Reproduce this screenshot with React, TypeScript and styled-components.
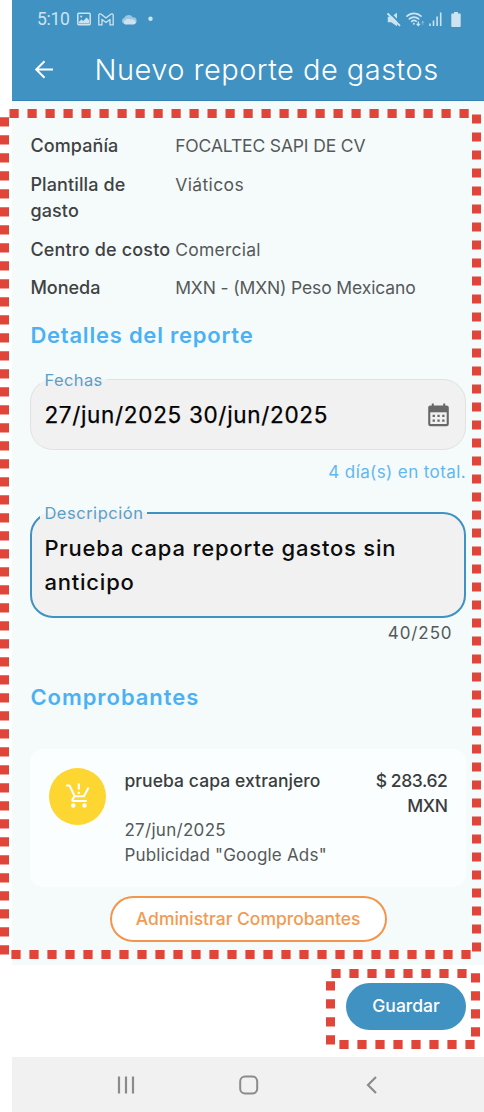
import React from 'react';
import styled, { createGlobalStyle } from 'styled-components';

const blue = '#3f92c2';
const sky = '#4cb1f3';
const red = '#e14539';

const GlobalStyle = createGlobalStyle`
  * { box-sizing: border-box; }
  body { margin: 0; background: #fff; font-family: Inter, sans-serif; }
`;

const Page = styled.div`
  position: relative;
  width: 484px;
  height: 1112px;
  padding-left: 12px;
  overflow: hidden;
  display: flex;
  flex-direction: column;
`;

const Header = styled.header`
  height: 101px;
  flex: none;
  background: ${blue};
  color: #fff;
  border-bottom: 1px solid #3585b4;
`;

const StatusBar = styled.div`
  height: 38px;
  padding: 0 23px 0 25px;
  display: flex;
  align-items: center;
  justify-content: space-between;
  color: #cde4f0;
  svg { display: block; }
`;

const StatusGroup = styled.div<{ $gap: number }>`
  display: flex;
  align-items: center;
  gap: ${p => p.$gap}px;
`;

const Clock = styled.span`
  font: 400 17.5px/20px Roboto, sans-serif;
  letter-spacing: -0.3px;
`;

const TitleBar = styled.div`
  height: 62px;
  display: flex;
  align-items: center;
  padding-left: 22px;
  svg { display: block; }
`;

const Title = styled.h1`
  margin: 2px 0 0 40.5px;
  font-size: 29px;
  font-weight: 300;
  line-height: 36px;
  letter-spacing: 0.47px;
`;

const Content = styled.main`
  height: 864px;
  flex: none;
  padding: 32.4px 18px 0 18.4px;
  background: #f5fbfb;
  display: flex;
  flex-direction: column;
`;

const Details = styled.dl`
  margin: 0;
  display: flex;
  flex-direction: column;
  gap: 13.2px;
`;

const DetailRow = styled.div`
  display: flex;
  font-size: 18px;
  line-height: 25.6px;
`;

const DetailLabel = styled.dt<{ $ls: number }>`
  width: 144.8px;
  flex: none;
  color: #3f4243;
  font-weight: 500;
  letter-spacing: ${p => p.$ls}px;
`;

const DetailValue = styled.dd<{ $ls: number }>`
  margin: 0;
  color: #55595a;
  font-size: 17.5px;
  font-weight: 400;
  letter-spacing: ${p => p.$ls}px;
  white-space: nowrap;
`;

const SectionTitle = styled.h2<{ $top: number; $ls: number }>`
  margin: ${p => p.$top}px 0 0;
  color: ${sky};
  font-size: 22px;
  font-weight: 600;
  line-height: 30px;
  letter-spacing: ${p => p.$ls}px;
`;

const Field = styled.fieldset<{ $active?: boolean; $top: number; $height: number }>`
  margin: ${p => p.$top}px 0 0;
  height: ${p => p.$height}px;
  min-width: 0;
  padding: 0 ${p => (p.$active ? 12 : 16)}px 0 ${p => (p.$active ? 8 : 9)}px;
  border: ${p => (p.$active ? `2px solid ${blue}` : '1px solid #e1e3e3')};
  border-radius: 23px;
  background: #f1f1f1;
`;

const Legend = styled.legend<{ $ls: number }>`
  height: 20px;
  padding: 0 4px;
  color: #5a9fc8;
  font-size: 16.5px;
  font-weight: 400;
  line-height: 20px;
  letter-spacing: ${p => p.$ls}px;
`;

const DateValue = styled.div`
  height: 50px;
  padding-left: 4px;
  display: flex;
  align-items: center;
  justify-content: space-between;
  color: #000;
  font-size: 22.5px;
  font-weight: 400;
  line-height: 30px;
  letter-spacing: 0.68px;
  -webkit-text-stroke: 0.25px #000;
  svg { display: block; }
`;

const Description = styled.div`
  padding: 8px 0 0 4px;
  color: #0c0c0c;
  font-size: 22px;
  font-weight: 500;
  line-height: 34px;
  letter-spacing: 0.79px;
`;

const Helper = styled.div<{ $top: number; $right: number; $color: string; $ls: number }>`
  margin-top: ${p => p.$top}px;
  padding-right: ${p => p.$right}px;
  text-align: right;
  color: ${p => p.$color};
  font-size: 17px;
  font-weight: 400;
  line-height: 24px;
  letter-spacing: ${p => p.$ls}px;
`;

const Card = styled.article`
  margin-top: 37.5px;
  height: 138.3px;
  flex: none;
  padding: 18.5px 18.5px 0 18.5px;
  display: flex;
  align-items: flex-start;
  background: #fafefe;
  border-radius: 13px;
  color: #3a3d3e;
  font-size: 17.5px;
  line-height: 25px;
`;

const Avatar = styled.div`
  width: 57.5px;
  height: 57.5px;
  flex: none;
  display: grid;
  place-items: center;
  border-radius: 50%;
  background: #fdd631;
`;

const CardBody = styled.div`
  flex: 1;
  margin: 0.3px 0 0 18px;
`;

const CardTop = styled.div`
  height: 50px;
  display: flex;
  justify-content: space-between;
  font-weight: 500;
  letter-spacing: 0.07px;
`;

const Amount = styled.div`
  width: 80px;
  text-align: right;
  letter-spacing: -0.4px;
`;

const CardLine = styled.div<{ $ls: number }>`
  color: #55595a;
  font-size: 17px;
  font-weight: 400;
  letter-spacing: ${p => p.$ls}px;
`;

const Button = styled.button<{ $filled?: boolean }>`
  padding: 0;
  height: 46.5px;
  width: ${p => (p.$filled ? 120 : 277)}px;
  border: ${p => (p.$filled ? 'none' : '2px solid #f3954b')};
  border-radius: 24px;
  background: ${p => (p.$filled ? blue : '#fff')};
  color: ${p => (p.$filled ? '#fff' : '#f39a52')};
  font: 500 17.5px/24px Inter, sans-serif;
  letter-spacing: -0.02px;
`;

const ManageRow = styled.div`
  margin-top: 8.4px;
  display: flex;
  justify-content: center;
`;

const Footer = styled.footer`
  height: 92px;
  flex: none;
  padding: 18px 18px 0 0;
  display: flex;
  justify-content: flex-end;
  align-items: flex-start;
`;

const NavBar = styled.nav`
  height: 55px;
  flex: none;
  display: flex;
  align-items: center;
  justify-content: space-between;
  padding: 1px 103px 0 103px;
  background: #f1f1f1;
  svg { display: block; }
`;

const Callouts = styled.svg`
  position: absolute;
  left: 0;
  top: 0;
  pointer-events: none;
`;

const details = [
  { label: 'Compañía', value: 'FOCALTEC SAPI DE CV', a: 0.1, b: -0.15 },
  { label: 'Plantilla de gasto', value: 'Viáticos', a: 0.12, b: 0.38 },
  { label: 'Centro de costo', value: 'Comercial', a: 0.18, b: 0.23 },
  { label: 'Moneda', value: 'MXN - (MXN) Peso Mexicano', a: 0, b: -0.13 },
];

const PictureIcon = () => (
  <svg width="14" height="14" viewBox="0 0 14 14" fill="none">
    <rect x=".8" y="1.3" width="12.4" height="11.4" rx="1" stroke="currentColor" strokeWidth="1.5" />
    <path d="M2 11.5V9.7l2.5-2.2 1.7 1.5L9.6 5.5 12 8v3.5z" fill="currentColor" />
    <circle cx="4.2" cy="4.4" r="1" fill="currentColor" />
  </svg>
);

const MailIcon = () => (
  <svg width="16" height="13" viewBox="0 0 16 13" fill="none" stroke="currentColor" strokeWidth="1.3" strokeLinejoin="round">
    <path d="M.8 11.900V2.200C.8.8 2.300.5 3.300 1.300L8 5l4.700-3.700c1-.8 2.500-.5 2.500.9v9.700h-3.200V6.500L8 9.500l-4-3v5.400z" />
  </svg>
);

const CloudIcon = () => (
  <svg width="16" height="11" viewBox="0 0 16 11">
    <path d="M3.500 10A3.200 3.200 0 0 1 3.200 3.800 5 5 0 0 1 12 3.400 3.300 3.300 0 0 1 12.700 10z" fill="currentColor" opacity=".65" />
    <path d="M4 10.500a2.600 2.600 0 0 1 .5-4.500 4 4 0 0 1 5-.4 3 3 0 0 1 3.300.4 2.300 2.300 0 0 1 .2 4.500z" fill="currentColor" />
  </svg>
);

const MuteIcon = () => (
  <svg width="14" height="15" viewBox="0 0 14 15">
    <path d="M.8 4.800h3.400L10 .8v13.400l-5.800-4H.8z" fill="currentColor" />
    <path d="M1.500-.5l13 13" stroke={blue} strokeWidth="1.800" />
    <path d="M.5 1.300l12.500 12.500" stroke="currentColor" strokeWidth="1.900" />
  </svg>
);

const WifiIcon = () => (
  <svg width="19" height="15" viewBox="0 0 19 15" fill="none" stroke="currentColor" strokeWidth="1.700" strokeLinecap="round">
    <path d="M1 4.200a10 10 0 0 1 14 0M3.400 6.900a6.600 6.600 0 0 1 9.200 0M5.700 9.400a3.400 3.400 0 0 1 4.400-.2" />
    <circle cx="7.800" cy="11.700" r="1" fill="currentColor" stroke="none" />
    <path d="M12.300 10v3.500M11 12.300l1.300 1.300 1.300-1.300" strokeWidth="1.300" />
    <path d="M16.800 12.500v-3M15.800 10.500l1-1 1 1" strokeWidth=".8" opacity=".6" />
  </svg>
);

const SignalIcon = () => (
  <svg width="13" height="14" viewBox="0 0 13 14" fill="currentColor">
    <path d="M.2 11.500h1.600V14H.2zM3.700 8.500h1.600V14H3.700zM7.300 4.500h1.600V14H7.300zM10.900.5h1.600V14h-1.600z" />
  </svg>
);

const BatteryIcon = () => (
  <svg width="10" height="15" viewBox="0 0 10 15" fill="currentColor">
    <path d="M3 0h4v1.500h1.700c.6 0 1 .4 1 1V14c0 .6-.4 1-1 1H1.300c-.6 0-1-.4-1-1V2.500c0-.6.4-1 1-1H3z" />
  </svg>
);

const BackIcon = () => (
  <svg width="20" height="20" viewBox="0 0 20 20" fill="none" stroke="#fff" strokeWidth="2">
    <path d="M19 10.500H2.500M10.500 2.200 2.200 10.500l8.300 8.300" />
  </svg>
);

const CalendarIcon = () => (
  <svg width="21" height="24" viewBox="0 0 21 24">
    <path d="M2.500 2.500h1.300V.5h2v2h9.400v-2h2v2h1.300A2.300 2.300 0 0 1 20.800 5v16a2.300 2.300 0 0 1-2.300 2.300h-16A2.300 2.300 0 0 1 .2 21V5a2.300 2.300 0 0 1 2.300-2.500z" fill="#686868" />
    <path d="M2.300 9.300h16.400V21H2.300z" fill="#f1f1f1" />
    <path d="M4.600 11.800h2.300v2.300H4.600zM9.400 11.800h2.300v2.300H9.400zM14.200 11.800h2.300v2.300h-2.300zM4.600 16.400h2.300v2.300H4.600zM9.400 16.400h2.300v2.300H9.400zM14.200 16.400h2.300v2.300h-2.300z" fill="#686868" />
  </svg>
);

const CartIcon = () => (
  <svg width="24" height="26" viewBox="0 0 24 26" fill="none" stroke="#fff" strokeWidth="2.100">
    <path d="M0 2.500h3.500L8.700 13.200h9.200l4.700-8.600" strokeLinejoin="round" />
    <path d="M8.500 13.200l-2 3.200c-.5 1 0 1.600 1 1.600h13.300" strokeLinejoin="round" />
    <path d="M12.800.5v6M12.800 8.700v2.200" />
    <circle cx="7.300" cy="22.500" r="2.200" fill="#fff" stroke="none" />
    <circle cx="18.500" cy="22.500" r="2.200" fill="#fff" stroke="none" />
  </svg>
);

export default function App() {
  return (
    <Page>
      <GlobalStyle />
      <Header>
        <StatusBar>
          <StatusGroup $gap={7}>
            <Clock>5:10</Clock>
            <PictureIcon />
            <MailIcon />
            <CloudIcon />
            <svg width="14" height="6" viewBox="0 0 14 6"><circle cx="6.500" cy="2.700" r="2.200" fill="currentColor" /></svg>
          </StatusGroup>
          <StatusGroup $gap={9}>
            <StatusGroup $gap={4.5}>
              <MuteIcon />
              <WifiIcon />
              <SignalIcon />
            </StatusGroup>
            <BatteryIcon />
          </StatusGroup>
        </StatusBar>
        <TitleBar>
          <BackIcon />
          <Title>Nuevo reporte de gastos</Title>
        </TitleBar>
      </Header>
      <Content>
        <Details>
          {details.map(d => (
            <DetailRow key={d.label}>
              <DetailLabel $ls={d.a}>{d.label}</DetailLabel>
              <DetailValue $ls={d.b}>{d.value}</DetailValue>
            </DetailRow>
          ))}
        </Details>
        <SectionTitle $top={19.5} $ls={0.77}>Detalles del reporte</SectionTitle>
        <Field $top={19.3} $height={80.5}>
          <Legend $ls={0.4}>Fechas</Legend>
          <DateValue>
            27/jun/2025 30/jun/2025
            <CalendarIcon />
          </DateValue>
        </Field>
        <Helper $top={9.5} $right={0} $color="#5fb8f0" $ls={0.4}>4 día(s) en total.</Helper>
        <Field $active $top={19.5} $height={114.5}>
          <Legend $ls={0.52}>Descripción</Legend>
          <Description>Prueba capa reporte gastos sin anticipo</Description>
        </Field>
        <Helper $top={3.6} $right={13.5} $color="#55595a" $ls={0.9}>40/250</Helper>
        <SectionTitle $top={36.2} $ls={0.95}>Comprobantes</SectionTitle>
        <Card>
          <Avatar><CartIcon /></Avatar>
          <CardBody>
            <CardTop>
              <span>prueba capa extranjero</span>
              <Amount>$ 283.62 MXN</Amount>
            </CardTop>
            <CardLine $ls={0.3}>27/jun/2025</CardLine>
            <CardLine $ls={0.2}>Publicidad "Google Ads"</CardLine>
          </CardBody>
        </Card>
        <ManageRow><Button>Administrar Comprobantes</Button></ManageRow>
      </Content>
      <Footer><Button $filled>Guardar</Button></Footer>
      <NavBar>
        <svg width="22" height="18" viewBox="0 0 22 18" stroke="#8b8b8b" strokeWidth="2.200"><path d="M4 .5v17M11 .5v17M18 .5v17" /></svg>
        <svg width="20" height="20" viewBox="0 0 20 20" fill="none" stroke="#8b8b8b" strokeWidth="2"><rect x="1.200" y="1.500" width="17" height="17" rx="4.800" /></svg>
        <svg width="20" height="18" viewBox="0 0 20 18" fill="none" stroke="#8b8b8b" strokeWidth="2.200"><path d="M15 1 7 9l8 8" /></svg>
      </NavBar>
      <Callouts width="484" height="1112" viewBox="0 0 484 1112" fill="none" stroke={red} strokeWidth="9" strokeDasharray="9.200 8.800">
        <path d="M9.500 113.500H470" />
        <path d="M4.500 117.200V955" />
        <path d="M476.500 114.400V952" />
        <path d="M11.400 954.500H471" />
        <path d="M331.400 973.500H467" />
        <path d="M330.500 981.300V1046" />
        <path d="M475.500 973.300V1038" />
        <path d="M339.400 1044.500H475" />
      </Callouts>
    </Page>
  );
}
